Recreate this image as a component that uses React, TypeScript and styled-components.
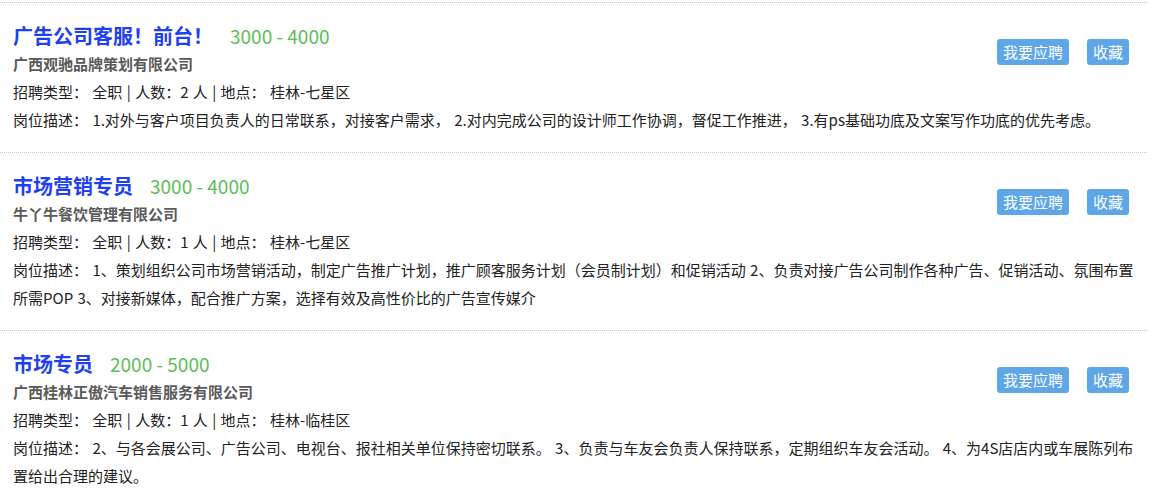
import * as React from "react"
import styled, { createGlobalStyle } from "styled-components"

const GlobalStyle = createGlobalStyle`
    html, body {
        margin: 0;
        padding: 0;
        background: #fff;
    }
    body {
        font-family: "Noto Sans CJK SC", "Microsoft YaHei", sans-serif;
        color: #222;
    }
`;

const JobList = styled.ul`
    width: 1147px;
    margin: 0;
    padding: 2px 0 0;
    list-style: none;
`;

const JobItem = styled.li`
    border-top: 1px dotted #c8c8c8;
    padding: 18px 10px 18px 13px;
`;

const Header = styled.div`
    display: flex;
    justify-content: space-between;
    align-items: flex-start;
`;

const Summary = styled.div`
    display: flex;
    flex-direction: column;
`;

const TitleRow = styled.div`
    display: flex;
    align-items: center;
    height: 29px;
`;

const Title = styled.a`
    font-size: 20px;
    font-weight: bold;
    color: #1f3ff2;
    text-decoration: none;
`;

const Salary = styled.span`
    margin-left: 17px;
    font-size: 19px;
    color: #5cbd5c;
`;

const Company = styled.div`
    font-size: 15px;
    font-weight: bold;
    color: #5a5a5a;
    line-height: 28px;
`;

const Line = styled.div`
    font-size: 15px;
    line-height: 28px;
    word-spacing: 1px;
    color: #222;
`;

const Actions = styled.div`
    display: flex;
    gap: 18px;
    margin-top: 18px;
    margin-right: 8px;
`;

const ActionButton = styled.button`
    height: 26px;
    padding: 0 6px;
    border: none;
    border-radius: 3px;
    background: #5ea6e5;
    color: #fff;
    font-family: inherit;
    font-size: 15px;
    line-height: 26px;
    cursor: pointer;
`;

type Job = {
    title: string
    salary: string
    company: string
    count: number
    place: string
    description: string
}

const jobs: Job[] = [
    {
        title: "广告公司客服！前台！",
        salary: "3000 - 4000",
        company: "广西观驰品牌策划有限公司",
        count: 2,
        place: "桂林-七星区",
        description: "1.对外与客户项目负责人的日常联系，对接客户需求， 2.对内完成公司的设计师工作协调，督促工作推进， 3.有ps基础功底及文案写作功底的优先考虑。",
    },
    {
        title: "市场营销专员",
        salary: "3000 - 4000",
        company: "牛丫牛餐饮管理有限公司",
        count: 1,
        place: "桂林-七星区",
        description: "1、策划组织公司市场营销活动，制定广告推广计划，推广顾客服务计划（会员制计划）和促销活动 2、负责对接广告公司制作各种广告、促销活动、氛围布置所需POP 3、对接新媒体，配合推广方案，选择有效及高性价比的广告宣传媒介",
    },
    {
        title: "市场专员",
        salary: "2000 - 5000",
        company: "广西桂林正傲汽车销售服务有限公司",
        count: 1,
        place: "桂林-临桂区",
        description: "2、与各会展公司、广告公司、电视台、报社相关单位保持密切联系。 3、负责与车友会负责人保持联系，定期组织车友会活动。 4、为4S店店内或车展陈列布置给出合理的建议。",
    },
];

const App = () => {
    return (
        <>
            <GlobalStyle />
            <JobList>
                {jobs.map((job, i) => (
                    <JobItem key={i}>
                        <Header>
                            <Summary>
                                <TitleRow>
                                    <Title href="#">{job.title}</Title>
                                    <Salary>{job.salary}</Salary>
                                </TitleRow>
                                <Company>{job.company}</Company>
                                <Line>
                                    招聘类型： 全职 | 人数：{job.count} 人 | 地点： {job.place}
                                </Line>
                            </Summary>
                            <Actions>
                                <ActionButton>我要应聘</ActionButton>
                                <ActionButton>收藏</ActionButton>
                            </Actions>
                        </Header>
                        <Line>
                            岗位描述： {job.description}
                        </Line>
                    </JobItem>
                ))}
            </JobList>
        </>
    )
}

export default App;
